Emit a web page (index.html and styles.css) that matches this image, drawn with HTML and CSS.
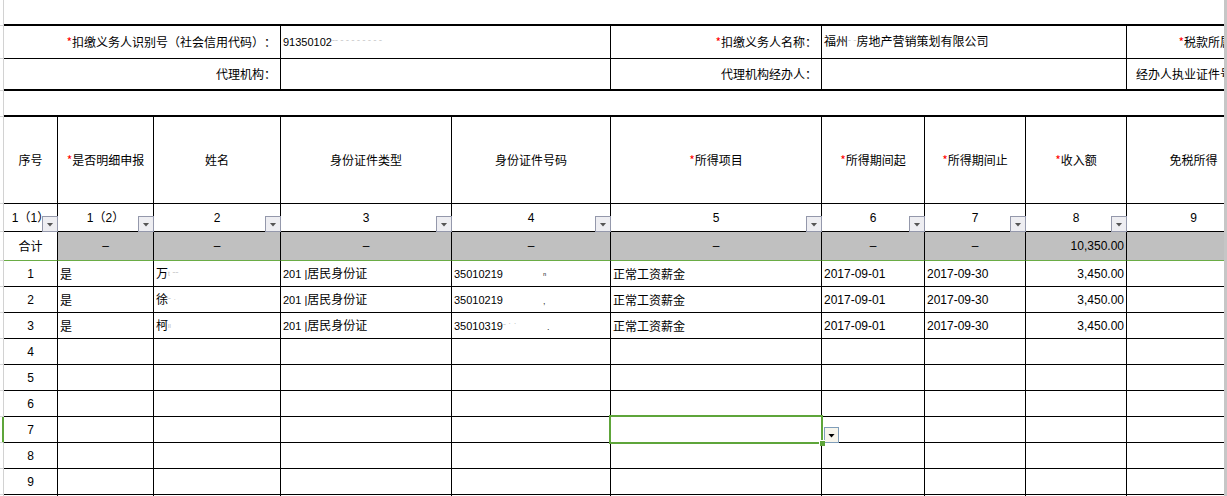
FILE: index.html
```html
<!DOCTYPE html>
<html lang="zh-CN">
<head>
<meta charset="utf-8">
<title>扣缴个人所得税报告表</title>
<link rel="stylesheet" href="styles.css">
</head>
<body>
<div class="screen">
  <div class="viewport">
    <table class="sheet">
      <colgroup>
        <col class="w-rh"><col class="w1"><col class="w2"><col class="w3"><col class="w4"><col class="w5"><col class="w6"><col class="w7"><col class="w8"><col class="w9"><col class="w10">
      </colgroup>
      <tbody>
        <tr class="r-top"><td class="rh"></td><td colspan="10" class="blank"></td></tr>
        <tr class="r-a">
          <td class="rh"></td>
          <td colspan="3" class="lab"><span class="req">*</span>扣缴义务人识别号（社会信用代码）：</td>
          <td colspan="2" class="val"><span class="lat">91350102</span><span class="mask">ˉˉ ˉ ˉ ˉ ˉ ˉ ˉ ˉ ˉ</span></td>
          <td class="lab"><span class="req">*</span>扣缴义务人名称：</td>
          <td colspan="3" class="val">福州<span class="mask">ˉ ˉ</span>房地产营销策划有限公司</td>
          <td class="lab"><span class="req">*</span>税款所属期：</td>
        </tr>
        <tr class="r-b">
          <td class="rh"></td>
          <td colspan="3" class="lab">代理机构：</td>
          <td colspan="2" class="val"></td>
          <td class="lab">代理机构经办人：</td>
          <td colspan="3" class="val"></td>
          <td class="lab">经办人执业证件号码：</td>
        </tr>
        <tr class="r-gap"><td class="rh"></td><td colspan="10" class="blank"></td></tr>
        <tr class="r-head">
          <td class="rh"></td>
          <td class="c">序号</td>
          <td class="c"><span class="req">*</span>是否明细申报</td>
          <td class="c">姓名</td>
          <td class="c">身份证件类型</td>
          <td class="c">身份证件号码</td>
          <td class="c"><span class="req">*</span>所得项目</td>
          <td class="c"><span class="req">*</span>所得期间起</td>
          <td class="c"><span class="req">*</span>所得期间止</td>
          <td class="c"><span class="req">*</span>收入额</td>
          <td class="c">免税所得</td>
        </tr>
        <tr class="r-idx">
          <td class="rh"></td>
          <td class="c num dd-cell">1（1）<span class="dd"></span></td>
          <td class="c num dd-cell">1（2）<span class="dd"></span></td>
          <td class="c num dd-cell">2<span class="dd"></span></td>
          <td class="c num dd-cell">3<span class="dd"></span></td>
          <td class="c num dd-cell">4<span class="dd"></span></td>
          <td class="c num dd-cell">5<span class="dd"></span></td>
          <td class="c num dd-cell">6<span class="dd"></span></td>
          <td class="c num dd-cell">7<span class="dd"></span></td>
          <td class="c num dd-cell">8<span class="dd"></span></td>
          <td class="c num">9</td>
        </tr>
        <tr class="r-sum">
          <td class="rh"></td>
          <td class="c">合计</td>
          <td class="c gray dash">–</td>
          <td class="c gray dash">–</td>
          <td class="c gray dash">–</td>
          <td class="c gray dash">–</td>
          <td class="c gray dash">–</td>
          <td class="c gray dash">–</td>
          <td class="c gray dash">–</td>
          <td class="r gray num">10,350.00</td>
          <td class="gray"></td>
        </tr>
        <tr class="r-row">
          <td class="rh"></td>
          <td class="c num">1</td>
          <td>是</td>
          <td>万<span class="mask">ᵗ ˉˉ</span></td>
          <td><span class="lat">201 |</span>居民身份证</td>
          <td><span class="lat">35010219</span><span class="mask gap">ⁿ</span></td>
          <td>正常工资薪金</td>
          <td class="num">2017-09-01</td>
          <td class="num">2017-09-30</td>
          <td class="r num">3,450.00</td>
          <td></td>
        </tr>
        <tr class="r-row">
          <td class="rh"></td>
          <td class="c num">2</td>
          <td>是</td>
          <td>徐<span class="mask">ˉ ˑ</span></td>
          <td><span class="lat">201 |</span>居民身份证</td>
          <td><span class="lat">35010219</span><span class="mask gap">,</span></td>
          <td>正常工资薪金</td>
          <td class="num">2017-09-01</td>
          <td class="num">2017-09-30</td>
          <td class="r num">3,450.00</td>
          <td></td>
        </tr>
        <tr class="r-row">
          <td class="rh"></td>
          <td class="c num">3</td>
          <td>是</td>
          <td>柯<span class="mask">ᶦᶦ</span></td>
          <td><span class="lat">201 |</span>居民身份证</td>
          <td><span class="lat">35010319</span><span class="mask">ˉ ˙ ˙</span><span class="mask gap2">.</span></td>
          <td>正常工资薪金</td>
          <td class="num">2017-09-01</td>
          <td class="num">2017-09-30</td>
          <td class="r num">3,450.00</td>
          <td></td>
        </tr>
        <tr class="r-row"><td class="rh"></td><td class="c num">4</td><td></td><td></td><td></td><td></td><td></td><td></td><td></td><td></td><td></td></tr>
        <tr class="r-row"><td class="rh"></td><td class="c num">5</td><td></td><td></td><td></td><td></td><td></td><td></td><td></td><td></td><td></td></tr>
        <tr class="r-row"><td class="rh"></td><td class="c num">6</td><td></td><td></td><td></td><td></td><td></td><td></td><td></td><td></td><td></td></tr>
        <tr class="r-row">
          <td class="rh active"></td><td class="c num">7</td><td></td><td></td><td></td><td></td>
          <td class="selected"><span class="sel-box"></span><span class="handle"></span><span class="dd dd-sel"></span></td>
          <td></td><td></td><td></td><td></td>
        </tr>
        <tr class="r-row"><td class="rh"></td><td class="c num">8</td><td></td><td></td><td></td><td></td><td></td><td></td><td></td><td></td><td></td></tr>
        <tr class="r-row"><td class="rh"></td><td class="c num">9</td><td></td><td></td><td></td><td></td><td></td><td></td><td></td><td></td><td></td></tr>
        <tr class="r-row"><td class="rh"></td><td></td><td></td><td></td><td></td><td></td><td></td><td></td><td></td><td></td><td></td></tr>
      </tbody>
    </table>
  </div>
  <div class="vbar"></div>
</div>
</body>
</html>
```

FILE: styles.css
```css
* { box-sizing: border-box; }
html, body { margin: 0; padding: 0; background: #fff; }
body {
  font-family: "Noto Sans CJK SC", "Liberation Sans", sans-serif;
  font-size: 12px;
  color: #000;
  text-spacing-trim: space-all;
}
.screen { display: flex; height: 496px; overflow: hidden; }
.viewport { width: 1224px; flex: none; overflow: hidden; }
.vbar { width: 3px; flex: none; background: #c6c6c6; }

.sheet {
  table-layout: fixed;
  border-collapse: separate;
  border-spacing: 0;
  width: 1261px;
}
.w-rh { width: 4px; }
.w1 { width: 54px; }
.w2 { width: 96px; }
.w3 { width: 127px; }
.w4 { width: 171px; }
.w5 { width: 159px; }
.w6 { width: 211px; }
.w7 { width: 103px; }
.w8 { width: 101px; }
.w9 { width: 101px; }
.w10 { width: 134px; }

.sheet td {
  padding: 0 2px;
  border-right: 1px solid #000;
  border-bottom: 1px solid #000;
  line-height: 14px;
  white-space: nowrap;
  vertical-align: middle;
  text-align: left;
}
.sheet td.rh {
  padding: 0;
  border-right: 1px solid #d2d2d2;
  border-bottom: 1px solid #d6d6d6;
}
.sheet td.rh.active { box-shadow: inset -1px 0 0 #5ea53a; border-right-color: #5ea53a; }
.sheet td.blank { border-right: none; }

.r-top > td { height: 26px; }
.r-a > td { height: 33px; }
.r-b > td { height: 32px; }
.r-gap > td { height: 26px; }
.r-head > td { height: 87px; }
.r-idx > td { height: 28px; }
.r-sum > td { height: 29px; }
.r-row > td { height: 26px; }

.r-top > td:not(.rh),
.r-b > td:not(.rh),
.r-gap > td:not(.rh) { border-bottom-width: 2px; }
.r-sum > td:not(.rh) { border-bottom-color: #6aac45; }

.sheet td.lab { text-align: right; padding-right: 4px; }
.sheet td.val { padding-left: 2px; }
.sheet td.c { text-align: center; }
.sheet td.r { text-align: right; padding-right: 2px; }
.sheet td.gray { background: #c0c0c0; }

.req { color: #ff0000; }
.num {
  font-family: "Liberation Sans", "Noto Sans CJK SC", sans-serif;
  font-size: 12px;
}
.lat { font-family: "Liberation Sans", sans-serif; font-size: 11px; }
.dash { font-family: "Liberation Sans", sans-serif; }
.mask { color: #b8b8b8; font-family: "Liberation Sans", sans-serif; font-size: 9px; }
.mask.gap { margin-left: 40px; color: #333; }
.mask.gap2 { margin-left: 30px; color: #333; }

.dd-cell, .selected { position: relative; }
.dd {
  position: absolute;
  right: -1px;
  bottom: -1px;
  width: 16px;
  height: 16px;
  border: 1px solid #9498ab;
  background: #eeeef2;
  display: flex;
  align-items: center;
  justify-content: center;
  padding-top: 1px;
  z-index: 1;
}
.dd::after {
  content: "";
  width: 7px;
  height: 4px;
  background: #555;
  clip-path: polygon(0 0, 100% 0, 50% 100%);
}
.dd.dd-sel {
  right: -18px;
  width: 15px;
  border-color: #7f9db9;
  background: #f7f5ec;
}
.dd.dd-sel::after { background: #000; }

.sel-box {
  position: absolute;
  left: -2px;
  top: -2px;
  right: -2px;
  bottom: -2px;
  border: 2px solid #5ea53a;
  z-index: 2;
}
.handle {
  position: absolute;
  right: -4px;
  bottom: -4px;
  width: 6px;
  height: 6px;
  background: #5ea53a;
  border-left: 1px solid #fff;
  border-top: 1px solid #fff;
  z-index: 3;
}
```
